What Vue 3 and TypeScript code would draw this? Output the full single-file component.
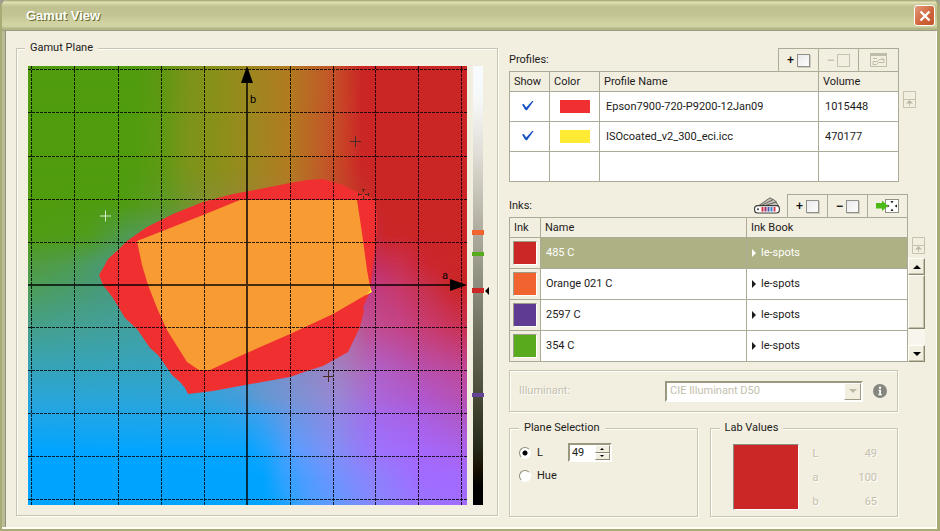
<script setup lang="ts">
import { ref } from 'vue'

interface Profile { name: string; color: string; volume: string; show: boolean }
interface Ink { name: string; color: string; book: string }
interface Band { y: number; stops: [number, string][] }

const profiles = ref<Profile[]>([
  { name: 'Epson7900-720-P9200-12Jan09', color: '#f03030', volume: '1015448', show: true },
  { name: 'ISOcoated_v2_300_eci.icc', color: '#ffeb33', volume: '470177', show: true },
])

const inks: Ink[] = [
  { name: '485 C', color: '#cb2727', book: 'le-spots' },
  { name: 'Orange 021 C', color: '#f16430', book: 'le-spots' },
  { name: '2597 C', color: '#5f3b93', book: 'le-spots' },
  { name: '354 C', color: '#59aa1c', book: 'le-spots' },
]

const selected = ref(0)
const plane = ref('L')
const lightness = ref('49')
const lab = [['L', '49'], ['a', '100'], ['b', '65']]

// Colour of the a/b plane, sampled along horizontal lines; bands blend between neighbours.
const field: Band[] = [
  { y: 0, stops: [[0, '#509c0e'], [108, '#509c0e'], [134, '#5f9812'], [160, '#7c941a'], [190, '#8a9018'], [219, '#9c8820'], [262, '#b27a20'], [300, '#c15a28'], [318, '#c83e26'], [334, '#cb2626'], [439, '#cb2626']] },
  { y: 100, stops: [[0, '#509c0e'], [105, '#509c0e'], [134, '#609a14'], [160, '#7c941a'], [190, '#8a9018'], [219, '#9a8a20'], [262, '#b27a20'], [295, '#c15a28'], [315, '#c84226'], [334, '#cb2626'], [439, '#cb2626']] },
  { y: 137, stops: [[0, '#509c0e'], [95, '#509c10'], [134, '#5c9a24'], [180, '#849030'], [262, '#b27a30'], [334, '#c73228'], [352, '#cb2626'], [439, '#cb2626']] },
  { y: 169, stops: [[0, '#509c12'], [60, '#509c1c'], [100, '#4f9a52'], [140, '#5a9860'], [334, '#c43048'], [360, '#cb2628'], [439, '#cb2626']] },
  { y: 199, stops: [[0, '#509c40'], [40, '#4e9c50'], [80, '#4a9a78'], [120, '#489878'], [340, '#c23068'], [372, '#c93050'], [400, '#cb2630'], [439, '#cb2626']] },
  { y: 219, stops: [[0, '#4e9e54'], [75, '#489a78'], [120, '#489888'], [345, '#c03a80'], [372, '#c83868'], [400, '#c83048'], [425, '#cb2626'], [439, '#cb2626']] },
  { y: 261, stops: [[0, '#46a08a'], [110, '#42a0a0'], [320, '#b26aa0'], [340, '#bf5092'], [372, '#c44488'], [400, '#c83c70'], [439, '#cb3050']] },
  { y: 304, stops: [[0, '#36a4ba'], [130, '#34a4c0'], [220, '#6098d0'], [309, '#a082c2'], [330, '#ac70bc'], [350, '#b060c8'], [390, '#b652b0'], [439, '#c04898']] },
  { y: 332, stops: [[0, '#2aa5d8'], [160, '#2ca5d8'], [210, '#409edc'], [232, '#6099d4'], [270, '#7c92d4'], [309, '#9888d4'], [345, '#aa68d8'], [390, '#b058d0'], [439, '#b850b0']] },
  { y: 350, stops: [[0, '#20a6e8'], [190, '#22a5e8'], [232, '#3ca0ee'], [262, '#6898e4'], [309, '#9088e2'], [348, '#a46aee'], [390, '#aa60e4'], [439, '#b058c4']] },
  { y: 385, stops: [[0, '#00a5ff'], [220, '#04a4ff'], [240, '#20a4ff'], [268, '#5c9cff'], [305, '#8090f4'], [345, '#9c74fc'], [390, '#a468fc'], [439, '#aa62ea']] },
  { y: 410, stops: [[0, '#00a4ff'], [235, '#00a4ff'], [255, '#30a2ff'], [280, '#529cff'], [310, '#7492fc'], [345, '#8e82fa'], [390, '#a06cff'], [439, '#a46aff']] },
  { y: 439, stops: [[0, '#00a4ff'], [240, '#00a4ff'], [262, '#2aa2ff'], [280, '#489eff'], [310, '#6498ff'], [345, '#8688ff'], [390, '#9a74ff'], [439, '#a26aff']] },
]
const bands = field.slice(1).map((b, i) => ({ top: field[i].y, height: b.y - field[i].y, from: i, to: i + 1 }))

const gridX = [3, 46, 90, 133, 176, 262, 305, 347, 390, 433]
const gridY = [3, 46, 90, 133, 176, 261, 304, 347, 390, 433]
</script>

<template>
  <div class="window">
    <header class="titlebar">
      <h1>Gamut View</h1>
      <button class="close" type="button" aria-label="Close">
        <svg viewBox="0 0 12 12" width="12" height="12"><path d="M1.5 1.5L10.5 10.5M10.5 1.5L1.5 10.5" stroke="#fff" stroke-width="2.4" /></svg>
      </button>
    </header>

    <main class="content">
      <fieldset class="group plane-group">
        <legend>Gamut Plane</legend>
        <svg class="plot" viewBox="0 0 462 439">
          <defs>
            <linearGradient v-for="(b, i) in field" :id="'band' + i" :key="i" gradientUnits="userSpaceOnUse" x1="0" y1="0" x2="439" y2="0">
              <stop v-for="s in b.stops" :key="s[0]" :offset="s[0] / 439" :stop-color="s[1]" />
            </linearGradient>
            <linearGradient id="fade" x1="0" y1="0" x2="0" y2="1">
              <stop offset="0" stop-color="#fff" stop-opacity="0" />
              <stop offset="1" stop-color="#fff" />
            </linearGradient>
            <mask id="fadeIn" maskContentUnits="objectBoundingBox" x="0" y="0" width="1" height="1" style="mask-type: alpha">
              <rect width="1" height="1" fill="url(#fade)" />
            </mask>
            <linearGradient id="light" x1="0" y1="0" x2="0" y2="1">
              <stop offset="0" stop-color="#f8fcff" />
              <stop offset=".08" stop-color="#f6f8f8" />
              <stop offset=".2" stop-color="#e0dcd6" />
              <stop offset=".35" stop-color="#b6b3a6" />
              <stop offset=".5" stop-color="#8c8d7e" />
              <stop offset=".62" stop-color="#6a6b58" />
              <stop offset=".75" stop-color="#4a4b38" />
              <stop offset=".87" stop-color="#25291a" />
              <stop offset=".92" stop-color="#180f02" />
              <stop offset=".96" stop-color="#000" />
            </linearGradient>
          </defs>

          <g shape-rendering="crispEdges">
            <template v-for="b in bands" :key="b.top">
              <rect x="0" :y="b.top" width="439" :height="b.height" :fill="`url(#band${b.from})`" />
              <rect x="0" :y="b.top" width="439" :height="b.height" :fill="`url(#band${b.to})`" mask="url(#fadeIn)" />
            </template>
          </g>

          <path fill="#f03030" d="M71 209L74 204L80 193L90 184L99 175L119 161L145 148L175 136L205 128L232 123L262 117L279 114L295 113L305 116L315 119L327 125L339 130L347 134L349 151L349 164L346 191L345 199L342 226L335 241L336 245L332 261L320 286L295 300L282 304L262 311L212 320L185 325L160 328L157 322L152 316L144 309L135 296L130 289L122 282L109 263L97 252L85 232L75 219Z" />
          <path fill="#f99b33" d="M212 134L329 134L334 167L339 204L343 226L305 248L262 268L212 290L182 304L171 304L159 296L139 264L129 242L120 219L114 199L109 175L132 166L175 149Z" />
          <path fill="#fff02c" d="M341 219L344 226L338 229L342 225Z" />

          <g stroke="#000" stroke-opacity=".82" stroke-dasharray="3 1">
            <path v-for="x in gridX" :key="'x' + x" :d="`M${x + .5} 0V439`" />
            <path v-for="y in gridY" :key="'y' + y" :d="`M0 ${y + .5}H439`" />
          </g>
          <path d="M219 6V439M0 219H430" stroke="#000" stroke-opacity=".72" stroke-width="2" fill="none" />
          <path d="M219 0L225 17H213ZM439 219L422 213V225Z" />
          <text x="222" y="37">b</text>
          <text x="414" y="213">a</text>

          <path d="M72 150H83M77.500 144.500V155.500" stroke="#d8ecc8" fill="none" />
          <path d="M322 75.500H333M327.500 70V81M295 310.500H306M300.500 305V316" stroke="#482c28" fill="none" />
          <path d="M330 128.500H334M337 128.500H341M335.500 123V126M335.500 130V134M334 123.500H337M334 133.500H337M330.500 127V130M340.500 127V130" stroke="#4c2420" fill="none" />

          <rect x="445" width="10" height="439" fill="url(#light)" />
          <g shape-rendering="crispEdges">
            <rect x="444" y="164" width="12" height="5" fill="#f16430" />
            <rect x="444" y="186" width="12" height="4" fill="#59aa1c" />
            <rect x="444" y="222" width="12" height="5" fill="#cb2727" />
            <rect x="444" y="327" width="12" height="4" fill="#64419a" />
          </g>
          <path d="M457 225L461 221V229Z" />
        </svg>
      </fieldset>

      <div class="side">
        <section class="profiles">
          <div class="bar">
            <h2>Profiles:</h2>
            <div class="tools">
              <button type="button" aria-label="Add profile"><span class="sign">+</span><i class="box"></i></button>
              <button type="button" aria-label="Remove profile" disabled><span class="sign">−</span><i class="box"></i></button>
              <button type="button" aria-label="Profile options" disabled>
                <svg viewBox="0 0 17 14" width="17" height="14" fill="none" stroke="#c0bcaa">
                  <path d="M.5 .5H16.500V13.500H.5Z" /><path d="M0 1.500H17" stroke-width="3" />
                  <path d="M3 5.500H7M3 11.500V8.500H7.500L9.500 6.500H14M12 4.500L14 6.500M3 11.500H6.500L8.500 9.500H14V6.500" />
                </svg>
              </button>
            </div>
          </div>
          <div class="tablewrap">
            <table>
              <colgroup><col class="w40"><col class="w50"><col><col class="w80"></colgroup>
              <thead><tr><th>Show</th><th>Color</th><th>Profile Name</th><th>Volume</th></tr></thead>
              <tbody>
                <tr v-for="p in profiles" :key="p.name">
                  <td><input v-model="p.show" class="tick" type="checkbox" :aria-label="p.name"></td>
                  <td><i class="chip" :style="{ background: p.color }"></i></td>
                  <td>{{ p.name }}</td>
                  <td>{{ p.volume }}</td>
                </tr>
                <tr><td></td><td></td><td></td><td></td></tr>
              </tbody>
            </table>
            <button class="sort" type="button" aria-label="Sort profiles" disabled>
              <svg viewBox="0 0 13 17" width="13" height="17"><path d="M.5 .5H12.500V16.500H.5ZM0 8.500H13M6.500 10V15" fill="none" stroke="#c6c2ae" /><path d="M3 12.500L6.500 9L10 12.500Z" fill="#bbb7a2" /></svg>
            </button>
          </div>
        </section>

        <section class="inks">
          <div class="bar">
            <h2>Inks:</h2>
            <button class="fan" type="button" aria-label="Ink books">
              <svg viewBox="0 0 26 17" width="26" height="17">
                <g fill="#c4c2b8" stroke="#4c4c46" stroke-width=".8">
                  <path d="M2 10.500L16 .8L19 2.500L10 11Z" /><path d="M2 11L19.500 2.500L22.500 5L10 12Z" /><path d="M2 11.500L22 5L24.500 9L10 13Z" />
                </g>
                <rect x=".6" y="8.600" width="24.800" height="7.400" rx="3" fill="#fff" stroke="#3d3d38" stroke-width="1.100" />
                <circle cx="4" cy="12.300" r="1" fill="#333" />
                <path d="M8.500 10V14.600" stroke="#d32b3c" stroke-width="2" /><path d="M11.500 10V14.600" stroke="#982b68" stroke-width="2" />
                <path d="M14.500 10V14.600" stroke="#4a55a8" stroke-width="2" /><path d="M17.500 10V14.600" stroke="#3486c5" stroke-width="2" />
                <path d="M20.500 10V14.600" stroke="#df3c55" stroke-width="2" />
              </svg>
            </button>
            <div class="tools">
              <button type="button" aria-label="Add ink"><span class="sign">+</span><i class="box"></i></button>
              <button type="button" aria-label="Remove ink"><span class="sign">−</span><i class="box"></i></button>
              <button type="button" aria-label="Move ink to target">
                <svg viewBox="0 0 23 14" width="23" height="14">
                  <rect x="9.500" y=".5" width="13" height="13" fill="#fff" stroke="#8f9184" />
                  <path d="M14.500 2H17.500L16 4.500ZM14.500 12H17.500L16 9.500ZM21 5.500V8.500L18.500 7ZM11.500 5.500V8.500L13.500 7Z" fill="#222" />
                  <path d="M0 4H6V1.500L12 7L6 12V9.500H0Z" fill="#4cbb17" />
                </svg>
              </button>
            </div>
          </div>
          <div class="tablewrap">
            <table>
              <colgroup><col class="w31"><col><col class="w161"></colgroup>
              <thead><tr><th>Ink</th><th>Name</th><th>Ink Book</th></tr></thead>
              <tbody>
                <tr v-for="(ink, i) in inks" :key="ink.name" :class="{ selected: i === selected }" @click="selected = i">
                  <td class="inkcell"><i class="swatch" :style="{ background: ink.color }"></i></td>
                  <td>{{ ink.name }}</td>
                  <td><span class="book"><i class="caret"></i>{{ ink.book }}</span></td>
                </tr>
              </tbody>
            </table>
            <div class="scrollcol">
              <button class="sort" type="button" aria-label="Sort inks" disabled>
                <svg viewBox="0 0 13 17" width="13" height="17"><path d="M.5 .5H12.500V16.500H.5ZM0 8.500H13M6.500 10V15" fill="none" stroke="#c6c2ae" /><path d="M3 12.500L6.500 9L10 12.500Z" fill="#bbb7a2" /></svg>
              </button>
              <div class="scrollbar">
                <button type="button" aria-label="Scroll up"><svg viewBox="0 0 8 4" width="8" height="4"><path d="M4 0L8 4H0Z" /></svg></button>
                <div class="thumb"></div>
                <div class="track"></div>
                <button type="button" aria-label="Scroll down"><svg viewBox="0 0 8 4" width="8" height="4"><path d="M0 0H8L4 4Z" /></svg></button>
              </div>
            </div>
          </div>
        </section>

        <div class="illuminant">
          <label for="illuminant">Illuminant:</label>
          <div class="combo">
            <select id="illuminant" disabled><option>CIE Illuminant D50</option></select>
            <span class="drop"><svg viewBox="0 0 8 4" width="8" height="4"><path d="M0 0H8L4 4Z" fill="#bdb9a4" /></svg></span>
          </div>
          <button class="info" type="button" aria-label="Information">
            <svg viewBox="0 0 14 14" width="14" height="14">
              <circle cx="7" cy="7" r="7" fill="#85877f" />
              <path d="M5.500 5.800H8V10.200H9V11.200H5.200V10.200H6.200V6.800H5.500Z" fill="#fff" /><circle cx="7" cy="3.800" r="1.200" fill="#fff" />
            </svg>
          </button>
        </div>

        <div class="pair">
          <fieldset class="group">
            <legend>Plane Selection</legend>
            <div class="choices">
              <div class="choice">
                <label><input v-model="plane" type="radio" name="plane" value="L">L</label>
                <div class="spin">
                  <input v-model="lightness" type="text" aria-label="Lightness">
                  <div class="steps">
                    <button type="button" aria-label="Increase" @click="lightness = String(+lightness + 1)"><svg viewBox="0 0 4 2" width="4" height="2"><path d="M2 0L4 2H0Z" /></svg></button>
                    <button type="button" aria-label="Decrease" @click="lightness = String(+lightness - 1)"><svg viewBox="0 0 4 2" width="4" height="2"><path d="M0 0H4L2 2Z" /></svg></button>
                  </div>
                </div>
              </div>
              <div class="choice">
                <label><input v-model="plane" type="radio" name="plane" value="Hue">Hue</label>
              </div>
            </div>
          </fieldset>

          <fieldset class="group">
            <legend>Lab Values</legend>
            <div class="lab">
              <i class="labcolor"></i>
              <dl>
                <div v-for="v in lab" :key="v[0]"><dt>{{ v[0] }}</dt><dd>{{ v[1] }}</dd></div>
              </dl>
            </div>
          </fieldset>
        </div>
      </div>
    </main>
  </div>
</template>

<style>
body { margin: 0; background: #9d9d90; }
</style>

<style scoped>
* { box-sizing: border-box; }
.window {
  min-height: 100vh;
  display: flex;
  flex-direction: column;
  border: solid #a9ab76;
  border-width: 0 3px 2px 2px;
  border-radius: 7px 7px 0 0;
  background: #f2eee0;
  color: #1c1c1a;
  font: 11px/14px Roboto, "Liberation Sans", Arial, sans-serif;
  overflow: hidden;
}
button, input, select { font: inherit; color: inherit; margin: 0; padding: 0; }
button { display: flex; align-items: center; justify-content: center; border: 0; background: none; }
svg { display: block; }
i { display: block; }

.titlebar {
  display: flex;
  align-items: center;
  justify-content: space-between;
  height: 31px;
  padding: 0 2px 0 24px;
  background: linear-gradient(#adb07c 0 1px, #e8e6be 2px, #d0d0a0 4px, #bfc190 7px, #c2c493 15px, #d3d4a5 24px, #cfd0a1 27px, #b4b786 28px, #b0b383 30px, #9b9c82 30px);
}
.titlebar h1 {
  margin: 0;
  color: #fff;
  font: bold 13px/16px "Liberation Sans", Arial, sans-serif;
  text-shadow: 1px 1px #6b6b28;
}
.close {
  width: 21px;
  height: 21px;
  border: 1px solid #fff;
  border-radius: 3px;
  background: linear-gradient(135deg, #e39a7c, #cf6238 60%, #c0562b);
}

.content {
  flex: 1;
  display: grid;
  grid-template-columns: minmax(0, 1fr) 416px;
  align-items: start;
  gap: 11px;
  padding: 10px 11px 10px 14px;
  border-right: 1px solid #fff;
  border-bottom: 2px solid #fffef6;
  box-shadow: inset 3px 0 #b9bb92, inset 4px 0 #8f9080;
}
.group {
  min-width: 0;
  margin: 0;
  padding: 0 11px;
  border: 1px solid #c8c5b4;
  box-shadow: 1px 1px #fffef8, inset 1px 1px #fffef8;
}
.group legend { margin: 0; padding: 0 5px; background: #f2eee0; height: 14px; }
.plane-group { padding: 11px 7px 10px 11px; }
.plane-group legend { margin-left: -3px; }
.plot { width: 100%; height: auto; }

.side { padding-top: 7px; }
.illuminant, .pair { margin-right: 27px; }
.profiles { margin-right: 9px; }
.inks { margin-top: 12px; }
.bar { display: flex; justify-content: flex-end; align-items: flex-end; height: 23px; padding-right: 17px; }
.bar h2 { flex: 1; margin: 0 0 4px; font: inherit; }
.tools { display: flex; }
.tools button {
  gap: 3px;
  width: 40px;
  height: 23px;
  border: solid #aaac98;
  border-width: 1px 0 0 1px;
}
.tools button:last-child { width: 41px; border-right-width: 1px; }
.sign { font: bold 12px/12px "Liberation Sans", Arial, sans-serif; color: #111; }
.box { width: 13px; height: 13px; border: 1px solid #8f9188; background: linear-gradient(135deg, #e9e9ee, #fdfdfb); box-shadow: 1px 1px #cfcdc0; }
.tools button:disabled .sign { color: #c6c2b0; }
.tools button:disabled .box { border-color: #c6c2b0; background: #f2eee0; box-shadow: none; }
.fan { margin: 0 7px 3px; }

.tablewrap { display: flex; align-items: flex-start; }
table { flex: 1 1 0; width: 100%; min-width: 0; table-layout: fixed; border-collapse: collapse; background: #fff; }
th, td { border: 1px solid #aaac98; text-align: left; font-weight: normal; white-space: nowrap; }
th { height: 20px; padding: 0 4px; background: #f2eee0; }
td { height: 30px; padding: 0 6px; }
.w40 { width: 40px; }
.w50 { width: 50px; }
.w80 { width: 80px; }
.w31 { width: 31px; }
.w161 { width: 161px; }
.inks td { height: 31px; padding: 0 5px; }
.chip { width: 30px; height: 13px; margin: 0 auto; }
.tick { display: block; appearance: none; width: 12px; height: 10px; margin: 0 auto 2px 6px; }
.tick:checked { background: #1450c0; clip-path: polygon(0 40%, 15% 35%, 35% 70%, 85% 5%, 100% 0, 40% 100%, 25% 90%); }
.inks .inkcell { padding: 0 3px; background: #f2eee0; }
.swatch { width: 24px; height: 24px; border: 1px solid; border-color: #9c9c88 #fff #fff #9c9c88; }
.selected td { background: #aeb183; color: #fff; }
.book { display: flex; align-items: center; gap: 5px; }
.caret { width: 4px; height: 8px; background: currentColor; clip-path: polygon(0 0, 100% 50%, 0 100%); }
.sort { width: 13px; height: 17px; margin: 20px 0 0 4px; }

.scrollcol { width: 17px; align-self: stretch; display: flex; flex-direction: column; }
.scrollbar { flex: 1; display: flex; flex-direction: column; margin-top: 4px; background: #f7f5ec; }
.scrollbar button, .thumb { border: 1px solid; border-color: #fffef8 #8a8872 #8a8872 #fffef8; box-shadow: inset -1px -1px #c5c1aa; background: #f2eee0; }
.scrollbar button { width: 17px; height: 17px; }
.thumb { height: 54px; }
.track { flex: 1; }

.illuminant {
  display: flex;
  align-items: center;
  height: 42px;
  margin-top: 8px;
  padding: 0 10px 0 9px;
  border: 1px solid #c8c5b4;
  box-shadow: 1px 1px #fffef8, inset 1px 1px #fffef8;
}
.illuminant label, .combo select, .lab dl { color: #c4c0ac; text-shadow: 1px 1px #fff; }
.illuminant label { flex: 1; }
.combo { position: relative; width: 198px; height: 21px; border: 2px solid; border-color: #9a987f #fff #fff #9a987f; background: #fff; }
.combo select { display: block; appearance: none; width: 100%; height: 17px; padding: 0 20px 0 3px; border: 0; background: none; opacity: 1; }
.drop {
  position: absolute;
  top: 0;
  right: 0;
  width: 17px;
  height: 17px;
  display: grid;
  place-items: center;
  border: 1px solid;
  border-color: #fff #a09d86 #a09d86 #fff;
  background: #f2eee0;
  pointer-events: none;
}
.info { margin-left: 10px; }

.pair { display: grid; grid-template-columns: 1fr 1fr; gap: 12px; margin-top: 9px; }
.pair .group { min-height: 96px; padding: 0 9px; }
.choices { padding-top: 6px; }
.choice { display: flex; align-items: center; gap: 25px; height: 23px; }
.choice label { display: flex; align-items: center; gap: 6px; }
.choice input[type="radio"] {
  appearance: none;
  width: 12px;
  height: 12px;
  border: 1px solid;
  border-color: #8e8c78 #fff #fff #8e8c78;
  border-radius: 50%;
  background: #fff;
}
.choice input[type="radio"]:checked { background: radial-gradient(circle, #000 2px, #fff 3px); }
.spin { display: flex; width: 44px; height: 19px; border: 2px solid; border-color: #9a987f #fff #fff #9a987f; background: #fff; }
.spin input { flex: 1; min-width: 0; border: 0; padding: 0 2px; background: none; }
.steps { display: flex; flex-direction: column; width: 15px; }
.steps button { flex: 1; border: 1px solid; border-color: #fff #8a8872 #8a8872 #fff; background: #f2eee0; }

.lab { display: flex; gap: 14px; padding: 9px 11px 0 13px; }
.labcolor { width: 66px; height: 66px; border: 1px solid; border-color: #8c8c80 #fff #fff #8c8c80; background: #cb2727; }
.lab dl { flex: 1; display: flex; flex-direction: column; justify-content: space-between; margin: 2px 0 0; }
.lab dl div { display: flex; justify-content: space-between; line-height: 16px; }
.lab dd { margin: 0; }
</style>
